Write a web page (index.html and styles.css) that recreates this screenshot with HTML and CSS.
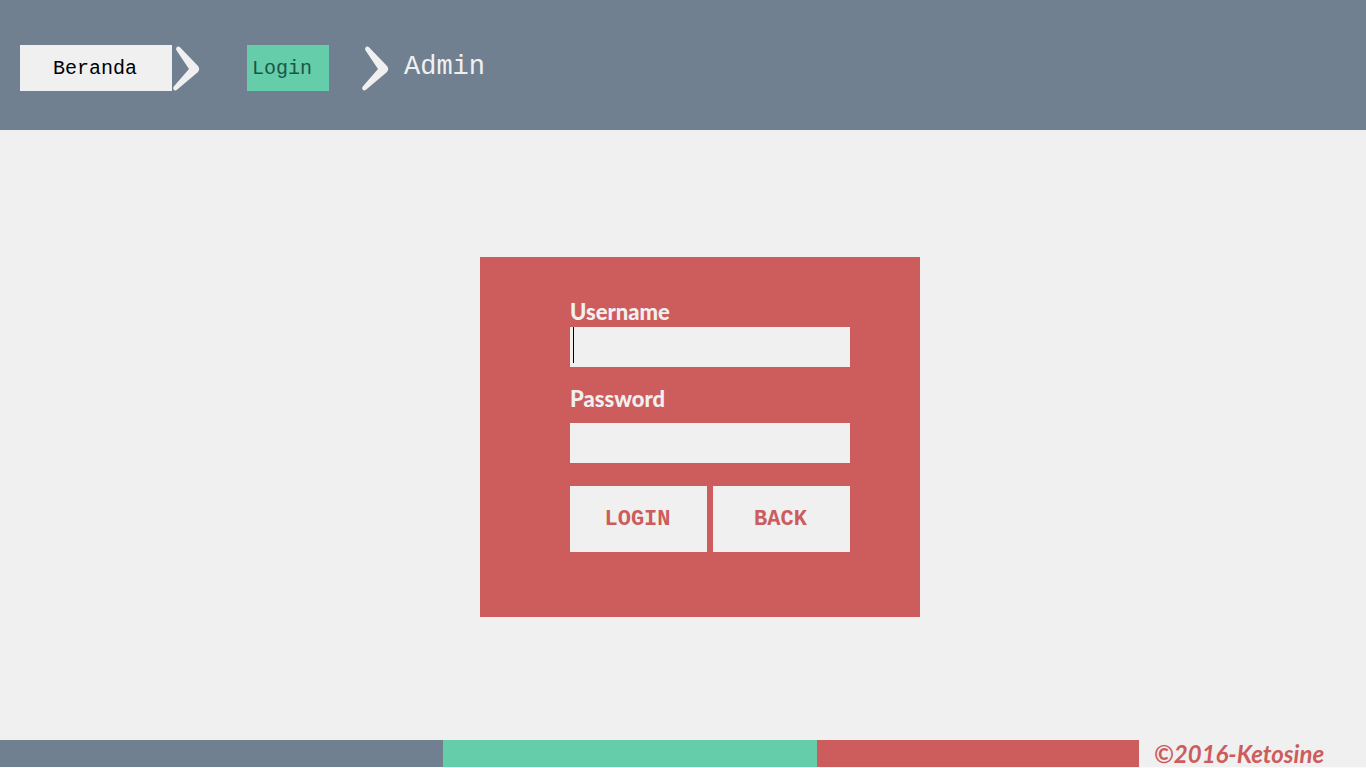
FILE: index.html
```html
<!DOCTYPE html>
<html lang="id">
<head>
<meta charset="utf-8">
<meta name="viewport" content="width=device-width, initial-scale=1">
<title>Login Admin</title>
<link rel="stylesheet" href="styles.css">
</head>
<body>
<header class="topbar">
  <nav class="crumbs" aria-label="Breadcrumb">
    <button class="crumb crumb-home" type="button">Beranda</button>
    <svg class="chevron chevron-home" viewBox="0 0 28 46" aria-hidden="true"><path d="M4.3 3Q5.5.5 8 2.3L26 21Q28.4 24 26 27L5 44.8Q3 46.3 1.6 44.6 .6 43 2 41.3L17 24 4.6 5.6Q3.8 4.2 4.3 3Z"/></svg>
    <button class="crumb crumb-login" type="button">Login</button>
    <svg class="chevron chevron-login" viewBox="0 0 28 46" aria-hidden="true"><path d="M4.3 3Q5.5.5 8 2.3L26 21Q28.4 24 26 27L5 44.8Q3 46.3 1.6 44.6 .6 43 2 41.3L17 24 4.6 5.6Q3.8 4.2 4.3 3Z"/></svg>
    <h1 class="page-name">Admin</h1>
  </nav>
</header>
<main class="content">
  <form class="card">
    <label class="label" for="username">Username</label>
    <input class="field field-active" id="username" name="username" type="text">
    <label class="label label-password" for="password">Password</label>
    <input class="field" id="password" name="password" type="password">
    <div class="actions">
      <button class="action" type="submit">LOGIN</button>
      <button class="action" type="button">BACK</button>
    </div>
  </form>
</main>
<footer class="footer">
  <div class="stripe-slate"></div>
  <div class="stripe-green"></div>
  <div class="stripe-red"></div>
  <p class="copyright">©2016-Ketosine</p>
</footer>
</body>
</html>
```
FILE: styles.css
```css
:root {
  --slate: #708090;
  --green: #66cdaa;
  --red: #cd5c5c;
  --paper: #f0f0f0;
  --mono: "Liberation Mono", monospace;
  --sans: Lato, sans-serif;
}

* {
  box-sizing: border-box;
}

body {
  display: flex;
  flex-direction: column;
  min-height: 100vh;
  margin: 0;
  background: var(--paper);
}

.topbar {
  padding: 45px 20px 39px;
  background: var(--slate);
}

.crumbs {
  display: flex;
  align-items: center;
}

.crumb {
  height: 46px;
  padding: 0;
  border: 0;
  font: 20px var(--mono);
}

.crumb-home {
  width: 152px;
  padding-right: 2px;
  background: var(--paper);
  color: #000;
}

.crumb-login {
  width: 82px;
  padding-left: 5px;
  background: var(--green);
  color: #175848;
  text-align: left;
}

.chevron {
  flex: none;
  width: 28px;
  height: 46px;
  fill: var(--paper);
}

.chevron-home {
  margin-right: 47px;
}

.chevron-login {
  margin: 0 15px 0 32px;
}

.page-name {
  margin: 0 0 2px;
  color: var(--paper);
  font: 27px var(--mono);
}

.content {
  display: flex;
  flex: 1;
  align-items: center;
  justify-content: center;
  padding: 4px 0 0 34px;
}

.card {
  display: flex;
  flex-direction: column;
  width: 440px;
  padding: 41px 70px 65px 90px;
  background: var(--red);
}

.label {
  margin-bottom: 1px;
  color: var(--paper);
  font: 900 22px/28px var(--sans);
}

.label-password {
  margin: 18px 0 10px;
}

.field {
  width: 100%;
  height: 40px;
  padding: 0 3px;
  border: 0;
  outline: 0;
  background: var(--paper);
  font: 22px var(--mono);
}

/* Text cursor of the active field */
.field-active {
  background: linear-gradient(#000, #000) 3px 0 / 1px 36px no-repeat var(--paper);
}

.actions {
  display: flex;
  gap: 6px;
  margin-top: 23px;
}

.action {
  flex: 1;
  height: 66px;
  padding: 0 2px 0 0;
  border: 0;
  background: var(--paper);
  color: var(--red);
  font: bold 22px var(--mono);
}

.footer {
  display: grid;
  grid-template-columns: 443fr 374fr 322fr 227fr;
  height: 28px;
  border-bottom: 1px solid #fafafa;
}

.stripe-slate {
  background: var(--slate);
}

.stripe-green {
  background: var(--green);
}

.stripe-red {
  background: var(--red);
}

.copyright {
  margin: 0;
  padding-left: 15px;
  color: var(--red);
  font: italic bold 24px/27px var(--sans);
  white-space: nowrap;
}
```
